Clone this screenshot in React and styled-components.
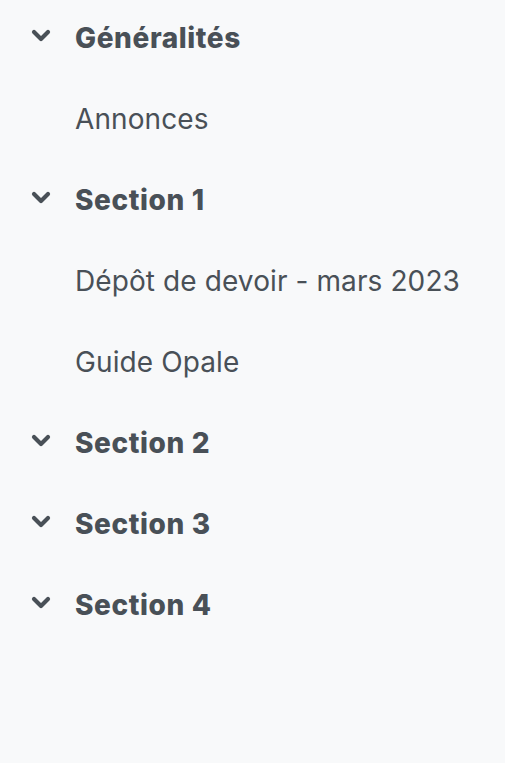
import React from 'react'
import styled, { createGlobalStyle } from 'styled-components'

const GlobalStyle = createGlobalStyle`
  html, body {
    margin: 0;
    padding: 0;
    background: #f8f9fa;
  }
  body {
    font-family: Inter, "Noto Sans", sans-serif;
    color: #495057;
  }
`

// Course index wrapper
const Index = styled.nav`
  display: flex;
  flex-direction: column;
  padding: 0 0 0 31px;
  margin-top: -3px;
  min-height: 763px;
  box-sizing: border-box;
`

const Row = styled.div`
  display: flex;
  align-items: center;
  height: 81px;
`

const Toggle = styled.span`
  display: flex;
  align-items: center;
  width: 20px;
  margin-right: 24px;
  margin-top: -4px;
  color: #495057;
`

const SectionTitle = styled.span`
  font-size: 28px;
  font-weight: 800;
  letter-spacing: 0.6px;
  color: #495057;
`

const Item = styled.a`
  margin-left: 44px;
  font-size: 28px;
  font-weight: 400;
  letter-spacing: 0.1px;
  color: #495057;
  text-decoration: none;
`

const Chevron = () => (
  <svg width="20" height="13" viewBox="0 0 20 13" fill="none">
    <path
      d="M3 3 L10 10 L17 3"
      stroke="currentColor"
      strokeWidth="4.2"
      strokeLinecap="round"
      strokeLinejoin="round"
    />
  </svg>
)

const sections = [
  { title: 'Généralités', items: ['Annonces'] },
  { title: 'Section 1', items: ['Dépôt de devoir - mars 2023', 'Guide Opale'] },
  { title: 'Section 2', items: [] },
  { title: 'Section 3', items: [] },
  { title: 'Section 4', items: [] },
]

export default function App() {
  return (
    <>
      <GlobalStyle />
      <Index>
        {sections.map((s) => (
          <React.Fragment key={s.title}>
            <Row>
              <Toggle>
                <Chevron />
              </Toggle>
              <SectionTitle>{s.title}</SectionTitle>
            </Row>
            {s.items.map((it) => (
              <Row key={it}>
                <Item href="#">{it}</Item>
              </Row>
            ))}
          </React.Fragment>
        ))}
      </Index>
    </>
  )
}
